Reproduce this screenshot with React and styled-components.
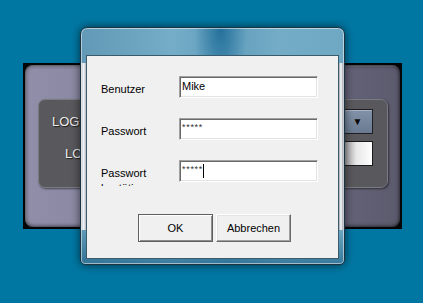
import React from 'react';
import styled, { createGlobalStyle } from 'styled-components';

const Global = createGlobalStyle`
  html, body {
    margin: 0;
    padding: 0;
    background: #0077a2;
  }
  #root {
    width: 423px;
    height: 303px;
    overflow: hidden;
  }
`;

const Desktop = styled.div`
  position: relative;
  width: 423px;
  height: 303px;
  background: #0077a2;
  font-family: "Liberation Sans", Arial, sans-serif;
`;

/* window behind the dialog */
const BackWindow = styled.div`
  position: absolute;
  left: 23px;
  top: 63px;
  width: 379px;
  height: 166px;
  box-sizing: border-box;
  padding: 2px;
  background: #050508;
`;

const BackPanel = styled.div`
  height: 100%;
  box-sizing: border-box;
  border-radius: 8px;
  padding: 34px 12px 0 13px;
  display: flex;
  flex-direction: column;
  background: linear-gradient(to right, #908ea9 0%, #85839c 30%, #6c6a80 70%, #5c5a6d 100%);
  box-shadow: inset 0 0 4px rgba(0, 0, 0, 0.9), inset 2px 2px 1px rgba(255, 255, 255, 0.15);
`;

const SettingsBox = styled.div`
  height: 89px;
  box-sizing: border-box;
  border-radius: 7px;
  border: 1px solid #7b7b82;
  background: #59595d;
  box-shadow: 1px 1px 2px rgba(0, 0, 0, 0.5);
  padding: 9px 14px 0 0;
  display: grid;
  grid-template-columns: 1fr 30px;
  grid-auto-rows: 25px;
  row-gap: 7px;
  align-items: center;
`;

const BackLabel = styled.div`
  padding-left: ${p => p.$indent}px;
  color: #ececec;
  font-size: 13px;
  text-shadow: 1px 1px 1px #1c1c1c;
  white-space: nowrap;
`;

const Combo = styled.div`
  display: flex;
  height: 25px;
  margin-left: -6px;
`;

const ComboField = styled.div`
  width: 5px;
  box-sizing: border-box;
  background: #8e8e92;
  border: 1px solid #222;
  border-right: none;
`;

const ComboArrow = styled.div`
  flex: 1;
  box-sizing: border-box;
  border: 1px solid #1e1e24;
  background: linear-gradient(#8293a9, #6a7a90);
  box-shadow: inset 1px 1px 0 rgba(255, 255, 255, 0.3);
  display: flex;
  align-items: center;
  justify-content: center;
  color: #0a0a0a;
  font-size: 10px;
`;

const BackInput = styled.div`
  height: 25px;
  box-sizing: border-box;
  border: 1px solid #1a1a1a;
  background: linear-gradient(to right, #9a9a9e 0%, #e8e8e8 45%, #ffffff 100%);
`;

const BackButtons = styled.div`
  display: flex;
  padding: 6px 0 0 52px;
`;

const BackButton = styled.div`
  width: 40px;
  height: 17px;
  border-radius: 4px;
  background: #3c3c42;
  border: 1px solid #1d1d22;
`;

/* login dialog */
const Dialog = styled.div`
  position: absolute;
  left: 80px;
  top: 27px;
  z-index: 2;
  width: 265px;
  height: 238px;
  box-sizing: border-box;
  padding: 27px 5px 5px 5px;
  border: 1px solid #1b3442;
  border-radius: 7px 7px 5px 5px;
  box-shadow: 0 0 9px rgba(0, 0, 0, 0.6), inset 0 0 0 1px rgba(255, 255, 255, 0.5);
  background:
    linear-gradient(to right, #aeb4bc, #f2f5f8 50%, #b2b8c0) 0 35px / 5px 167px no-repeat,
    linear-gradient(to right, #9ca2aa, #ffffff 40%, #c9ced4 60%, #7d838c) 100% 35px / 5px 167px no-repeat,
    radial-gradient(ellipse 26px 70px at 53% 0%, rgba(25, 105, 150, 0.85), rgba(25, 105, 150, 0)),
    linear-gradient(to bottom, rgba(0, 0, 0, 0) 85%, rgba(20, 90, 130, 0.6)),
    linear-gradient(to right, #6199b6 0%, #75adc8 35%, #5f9cbb 55%, #74acc6 75%, #6ea8c3 100%);
`;

const Client = styled.div`
  height: 100%;
  box-sizing: border-box;
  background: #f0f0f0;
  border: 1px solid #3a5b6c;
  display: flex;
  flex-direction: column;
`;

const Form = styled.div`
  display: grid;
  grid-template-columns: 78px 139px;
  grid-auto-rows: 22px;
  row-gap: 20px;
  padding: 20px 0 0 14px;
`;

const Label = styled.div`
  align-self: start;
  margin-top: 6px;
  height: ${p => (p.$clip ? '20px' : 'auto')};
  overflow: hidden;
  font-size: 11px;
  line-height: 15px;
  color: #000;
`;

const Field = styled.div`
  box-sizing: border-box;
  height: 22px;
  background: #fff;
  border-top: 1px solid #a0a0a0;
  border-left: 1px solid #a0a0a0;
  border-right: 1px solid #fff;
  border-bottom: 1px solid #fff;
  box-shadow: inset 1px 1px 0 #696969, inset -1px -1px 0 #e3e3e3;
  padding: ${p => (p.$secret ? '1px 0 0 2px' : '2px 0 0 2px')};
  font-size: ${p => (p.$secret ? '9px' : '11px')};
  letter-spacing: ${p => (p.$secret ? '0.7px' : '0')};
  line-height: 14px;
  color: ${p => (p.$secret ? '#333' : '#000')};
  display: flex;
  align-items: flex-start;
`;

const Caret = styled.span`
  width: 1px;
  height: 14px;
  margin-top: 2px;
  background: #000;
`;

const Buttons = styled.div`
  display: flex;
  justify-content: center;
  gap: 3px;
  padding: 32px 0 0 4px;
`;

const Button = styled.div`
  width: 75px;
  height: 28px;
  box-sizing: border-box;
  background: #f0f0f0;
  border: 1px solid;
  border-color: ${p => (p.$default ? '#5f5f5f' : '#ffffff #696969 #696969 #ffffff')};
  box-shadow: ${p =>
    p.$default
      ? 'inset 1px 1px 0 #fff, inset -1px -1px 0 #8c8c8c'
      : 'inset -1px -1px 0 #a0a0a0, inset 1px 1px 0 #e3e3e3'};
  display: flex;
  align-items: center;
  justify-content: center;
  font-size: 11px;
  color: #000;
`;

export default function App() {
  return (
    <Desktop>
      <Global />
      <BackWindow>
        <BackPanel>
          <SettingsBox>
            <BackLabel $indent={13}>LOGIN</BackLabel>
            <Combo>
              <ComboField />
              <ComboArrow>▼</ComboArrow>
            </Combo>
            <BackLabel $indent={26}>LOGIN</BackLabel>
            <BackInput />
          </SettingsBox>
          <BackButtons>
            <BackButton />
          </BackButtons>
        </BackPanel>
      </BackWindow>

      <Dialog>
        <Client>
          <Form>
            <Label>Benutzer</Label>
            <Field>Mike</Field>
            <Label>Passwort</Label>
            <Field $secret>*****</Field>
            <Label $clip>
              Passwort
              <br />
              bestätigen
            </Label>
            <Field $secret>
              *****
              <Caret />
            </Field>
          </Form>
          <Buttons>
            <Button $default>OK</Button>
            <Button>Abbrechen</Button>
          </Buttons>
        </Client>
      </Dialog>
    </Desktop>
  );
}
